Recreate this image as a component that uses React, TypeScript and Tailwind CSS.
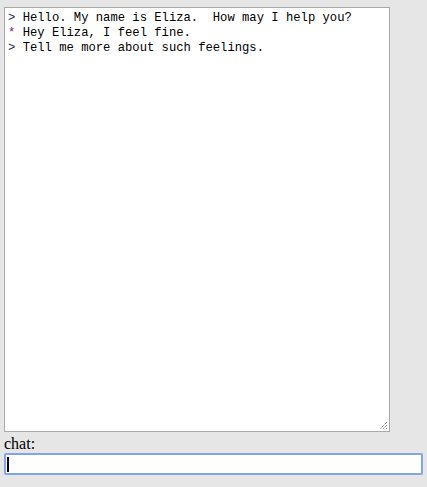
import React from "react";

const LINES = [
  { p: ">", t: "Hello. My name is Eliza.  How may I help you?" },
  { p: "*", t: "Hey Eliza, I feel fine." },
  { p: ">", t: "Tell me more about such feelings." },
];

export default function App() {
  return (
    <div className="min-h-[487px] w-[427px] bg-[#e6e6e6] px-[4px] pt-[7px]">
      <div className="relative h-[425px] w-[386px] border border-[#a9a9a9] bg-white px-[3px] py-[3px]">
        <div className="font-['Liberation_Mono',monospace] text-[12.2px] leading-[15px] text-black whitespace-pre">
          {LINES.map((l, i) => (
            <div key={i}>
              <span className={l.p === "*" ? "text-[#6b2a6b]" : "text-[#1b2a5a]"}>{l.p}</span>
              {" " + l.t}
            </div>
          ))}
        </div>
        {/* resize grip */}
        <svg
          className="absolute bottom-[1px] right-[1px]"
          width="9"
          height="9"
          viewBox="0 0 9 9"
        >
          <path d="M8 1 L1 8 M8 4 L4 8 M8 7 L7 8" stroke="#555" strokeWidth="1" strokeDasharray="1 1" />
        </svg>
      </div>
      <div className="mt-[3px] font-['Liberation_Serif',serif] text-[16px] leading-[18px] text-black">
        chat:
      </div>
      <div className="flex h-[22px] w-[419px] items-center rounded-[2px] border-2 border-[#7fa6ea] bg-white px-[1px]">
        <div className="h-[15px] w-[2px] bg-black" />
      </div>
    </div>
  );
}
